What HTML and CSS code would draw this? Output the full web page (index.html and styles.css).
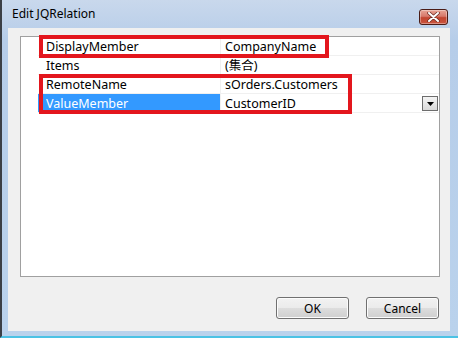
FILE: index.html
```html
<!DOCTYPE html>
<html lang="zh-Hant">
<head>
  <meta charset="UTF-8">
  <title>Edit JQRelation</title>
  <link rel="stylesheet" href="styles.css">
</head>
<body>
  <div class="window">
    <div class="titlebar">
      <span class="title">Edit JQRelation</span>
      <div class="close-btn">
        <svg width="13" height="10" viewBox="0 0 13 10">
          <path d="M2 1 L11 9 M11 1 L2 9" stroke="#6b2a22" stroke-width="3.4" stroke-linecap="round" />
          <path d="M2 1 L11 9 M11 1 L2 9" stroke="#ffffff" stroke-width="2" stroke-linecap="round" />
        </svg>
      </div>
    </div>

    <div class="client">
      <div class="grid">
        <div class="row">
          <div class="name">DisplayMember</div>
          <div class="value">CompanyName</div>
        </div>
        <div class="row">
          <div class="name">Items</div>
          <div class="value">(集合)</div>
        </div>
        <div class="row">
          <div class="name">RemoteName</div>
          <div class="value">sOrders.Customers</div>
        </div>
        <div class="row selected">
          <div class="name">ValueMember</div>
          <div class="value">
            CustomerID
            <span class="dropdown">
              <svg width="7" height="4" viewBox="0 0 7 4"><path d="M0 0 H7 L3.5 4 Z" fill="#000" /></svg>
            </span>
          </div>
        </div>

        <div class="mark mark-one"></div>
        <div class="mark mark-two"></div>
      </div>

      <div class="buttons">
        <button class="btn">OK</button>
        <button class="btn">Cancel</button>
      </div>
    </div>
  </div>
</body>
</html>
```

FILE: styles.css
```css
body {
  margin: 0;
  padding: 0;
  font-family: 'Noto Sans', 'Noto Sans CJK TC', sans-serif;
  font-size: 12px;
  color: #000;
}
.window {
  width: 458px;
  height: 338px;
  box-sizing: border-box;
  border-left: 2px solid #3b3f45;
  border-bottom: 2px solid #4cc2e4;
  background: linear-gradient(to bottom, #c9d8ec 0px, #b6cde9 40px, #bad2ec 100%);
  display: flex;
  flex-direction: column;
  padding: 0 8px 5px 6px;
}
.titlebar {
  height: 28px;
  display: flex;
  align-items: center;
  padding-left: 4px;
  flex-shrink: 0;
  position: relative;
}
.title {
  font-size: 12px;
  color: #000;
  margin-top: -2px;
}
.close-btn {
  position: absolute;
  left: 411px;
  top: 9px;
  width: 27px;
  height: 14px;
  border: 1px solid #4a1c16;
  border-radius: 3px;
  background: linear-gradient(to bottom, #e8a596 0%, #d7786a 45%, #c2442f 55%, #c9553f 100%);
  display: flex;
  align-items: center;
  justify-content: center;
  box-shadow: inset 0 0 0 1px rgba(255, 255, 255, 0.35);
}
.client {
  flex: 1;
  background: #f0f0f0;
  padding: 8px 10px 0 12px;
  display: flex;
  flex-direction: column;
}
.grid {
  position: relative;
  height: 239px;
  background: #fff;
  border: 1px solid #a0a0a0;
  font-size: 12.5px;
}
.row {
  display: flex;
  height: 18px;
  border-bottom: 1px solid #f0f0f0;
  margin-left: 17px;
}
.name {
  width: 183px;
  padding: 1px 0 0 8px;
  box-sizing: border-box;
  line-height: 17px;
  border-right: 1px solid #f0f0f0;
  white-space: nowrap;
}
.value {
  flex: 1;
  padding: 1px 0 0 4px;
  line-height: 17px;
  position: relative;
  white-space: nowrap;
}
.row.selected .name {
  background: #3399ff;
  color: #fff;
}
.dropdown {
  position: absolute;
  right: 1px;
  top: 2px;
  width: 14px;
  height: 13px;
  border: 1px solid #6d6d6d;
  background: linear-gradient(to bottom, #f4f4f4, #d9d9d9);
  display: flex;
  align-items: center;
  justify-content: center;
}
.mark {
  position: absolute;
  border: 4px solid #e3161d;
}
.mark-one {
  left: 18px;
  top: -2px;
  width: 282px;
  height: 15px;
}
.mark-two {
  left: 18px;
  top: 37px;
  width: 305px;
  height: 32px;
}
.buttons {
  display: flex;
  justify-content: flex-end;
  gap: 17px;
  margin-top: 20px;
  padding-right: 1px;
}
.btn {
  width: 73px;
  height: 22px;
  font-family: 'Noto Sans', sans-serif;
  font-size: 12px;
  border: 1px solid #707070;
  border-radius: 3px;
  background: linear-gradient(to bottom, #f2f2f2 0%, #ebebeb 50%, #dddddd 51%, #cfcfcf 100%);
  box-shadow: inset 0 0 0 1px #fcfcfc;
  padding: 0;
  color: #000;
}
```
